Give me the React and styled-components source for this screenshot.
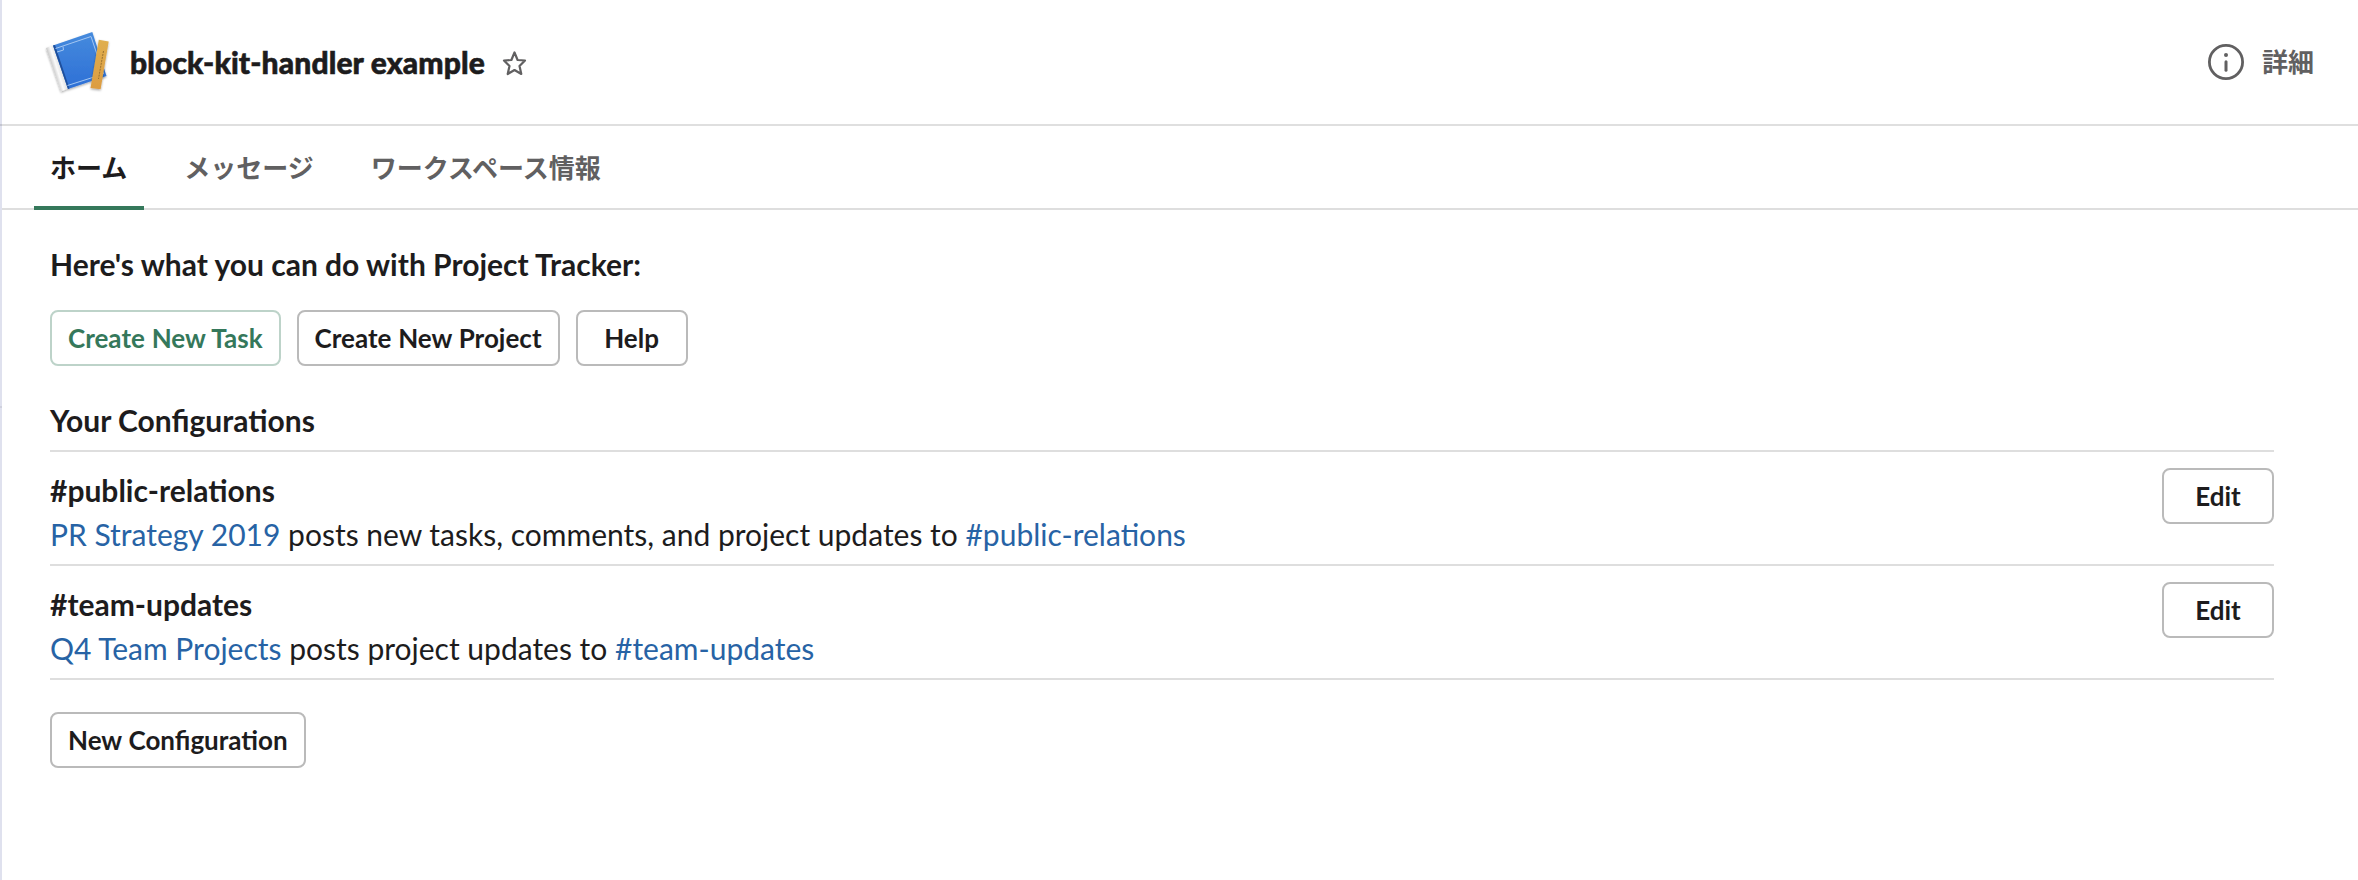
import React from 'react';
import styled, { createGlobalStyle } from 'styled-components';

const GlobalStyle = createGlobalStyle`
  *, *::before, *::after { box-sizing: border-box; }
  body {
    margin: 0;
    background: #fff;
    color: #1d1c1d;
    font-family: Lato, "Noto Sans CJK JP", sans-serif;
    font-size: 30px;
    line-height: 44px;
  }
`;

const Page = styled.div`
  height: 880px;
  padding-left: 2px;
  background:
    linear-gradient(#cfd1de, #cfd1de) 0 406px / 2px 2px no-repeat,
    linear-gradient(#dfe1ee, #dfe1ee) 0 0 / 2px 100% no-repeat,
    #fff;
`;

const Header = styled.header`
  display: flex;
  align-items: center;
  height: 126px;
  margin-left: -2px;
  padding: 0 44px 0 40px;
  border-bottom: 2px solid rgba(29, 28, 29, 0.14);
`;

const Logo = styled.svg`
  width: 74px;
  height: 74px;
  margin-top: 2px;
  flex: none;
`;

const Title = styled.h1`
  margin: 0 0 0 16px;
  font-size: 30px;
  font-weight: 900;
  line-height: 44px;
  letter-spacing: 0.13px;
  -webkit-text-stroke: 0.6px currentColor;
`;

const Star = styled.svg`
  width: 40px;
  height: 40px;
  margin: 3px 0 0 10px;
`;

const Details = styled.button`
  display: flex;
  align-items: center;
  gap: 16px;
  margin-left: auto;
  padding: 0;
  border: 0;
  background: none;
  color: #616061;
  font: 700 26px/40px Lato, "Noto Sans CJK JP", sans-serif;
`;

const InfoIcon = styled.svg`
  width: 40px;
  height: 40px;
`;

const Tabs = styled.nav`
  display: flex;
  gap: 24px;
  height: 84px;
  padding-left: 32px;
  border-bottom: 2px solid #dedede;
`;

const Tab = styled.a`
  height: 84px;
  padding: 0 17px 0 16px;
  border-bottom: 4px solid ${(p) => (p.$active ? '#35785b' : 'transparent')};
  color: ${(p) => (p.$active ? '#1d1c1d' : '#616061')};
  font-size: 26px;
  font-weight: 700;
  line-height: 84px;
`;

const Content = styled.main`
  padding: 32px 84px 0 48px;
`;

const Heading = styled.h2`
  margin: 0;
  font-size: 30px;
  font-weight: 700;
  line-height: 44px;
`;

const Actions = styled.div`
  display: flex;
  gap: 16px;
  margin: ${(p) => p.$margin};
`;

const Button = styled.button`
  height: 56px;
  min-width: 112px;
  padding: 0 16px;
  border: 2px solid ${(p) => (p.$primary ? '#bdd3c9' : '#bababa')};
  border-radius: 8px;
  background: #fff;
  color: ${(p) => (p.$primary ? '#35785b' : '#1d1c1d')};
  font: 700 26px/52px Lato, sans-serif;
  word-spacing: 0.5px;
  white-space: nowrap;
`;

const ConfigList = styled.ul`
  margin: 8px 0 0;
  padding: 0;
  border-top: 2px solid #dedede;
  list-style: none;
`;

const ConfigRow = styled.li`
  display: flex;
  justify-content: space-between;
  align-items: flex-start;
  height: 114px;
  padding-top: 16px;
  border-bottom: 2px solid #dedede;
`;

const Channel = styled.strong`
  display: block;
  font-weight: 700;
`;

const Link = styled.a`
  color: #2763a5;
`;

const configs = [
  { channel: '#public-relations', project: 'PR Strategy 2019', action: 'posts new tasks, comments, and project updates to' },
  { channel: '#team-updates', project: 'Q4 Team Projects', action: 'posts project updates to' },
];

function AppLogo() {
  return (
    <Logo viewBox="0 0 74 74" aria-hidden="true">
      <defs>
        <linearGradient id="cover" x1="0" y1="0" x2="0" y2="1">
          <stop offset="0" stopColor="#468bdd" />
          <stop offset="1" stopColor="#2d6fd6" />
        </linearGradient>
        <linearGradient id="wood" x1="0" y1="0" x2="0" y2="1">
          <stop offset="0" stopColor="#e0af4f" />
          <stop offset="1" stopColor="#dc9c42" />
        </linearGradient>
        <linearGradient id="roll" gradientUnits="userSpaceOnUse" x1="13" y1="44" x2="21" y2="41.500">
          <stop offset="0" stopColor="#c9c9c9" />
          <stop offset="0.5" stopColor="#fafafa" />
          <stop offset="1" stopColor="#e2e2e2" />
        </linearGradient>
        <filter id="soft" x="-20%" y="-20%" width="150%" height="150%">
          <feDropShadow dx="0" dy="1.2" stdDeviation="1.2" floodOpacity="0.35" />
        </filter>
      </defs>
      <g filter="url(#soft)">
        <path d="M6 22 13 19.500 28 62.500 21 65.500Z" fill="url(#roll)" />
        <path d="M13 19.500 52.300 6 66.500 50 28 63Z" fill="url(#cover)" />
      </g>
      <path d="M13 19.500 15 19 29.500 62.500 28 63Z" fill="#1e4f9c" />
      <path d="M15.500 22.500 51 10.500 63.500 48M27.500 59.500 62 48.500M17 26 23.500 24 23 20.500" fill="none" stroke="#a3c6f2" />
      <path d="M58.800 13.700 68.700 15.500 60.600 63.300 50.500 62Z" fill="url(#wood)" filter="url(#soft)" />
      <path d="M63.500 25 58.500 53" stroke="#99712f" strokeDasharray="2 1" />
    </Logo>
  );
}

function ActionButton({ children, primary }) {
  return <Button type="button" $primary={primary}>{children}</Button>;
}

export default function App() {
  return (
    <>
      <GlobalStyle />
      <Page>
        <Header>
          <AppLogo />
          <Title>block-kit-handler example</Title>
          <Star viewBox="0 0 40 40" aria-hidden="true">
            <path d="M19.500 8.500 22.600 16 30 16.500 24.500 22 26.300 30 19.500 26 12.700 30 14.500 22 9 16.500 16.400 16Z" fill="none" stroke="#616061" strokeWidth="2.200" strokeLinejoin="round" />
          </Star>
          <Details type="button">
            <InfoIcon viewBox="0 0 40 40" aria-hidden="true">
              <circle cx="20" cy="20" r="16.600" fill="none" stroke="#616061" strokeWidth="2.800" />
              <circle cx="20" cy="13" r="2" fill="#616061" />
              <path d="M20 19.800V28.200" stroke="#616061" strokeWidth="3" strokeLinecap="round" />
            </InfoIcon>
            詳細
          </Details>
        </Header>
        <Tabs>
          <Tab $active>ホーム</Tab>
          <Tab>メッセージ</Tab>
          <Tab>ワークスペース情報</Tab>
        </Tabs>
        <Content>
          <Heading>Here's what you can do with Project Tracker:</Heading>
          <Actions $margin="24px 0 32px">
            <ActionButton primary>Create New Task</ActionButton>
            <ActionButton>Create New Project</ActionButton>
            <ActionButton>Help</ActionButton>
          </Actions>
          <Heading>Your Configurations</Heading>
          <ConfigList>
            {configs.map((c) => (
              <ConfigRow key={c.channel}>
                <div>
                  <Channel>{c.channel}</Channel>
                  <Link>{c.project}</Link> {c.action} <Link>{c.channel}</Link>
                </div>
                <ActionButton>Edit</ActionButton>
              </ConfigRow>
            ))}
          </ConfigList>
          <Actions $margin="32px 0 0">
            <ActionButton>New Configuration</ActionButton>
          </Actions>
        </Content>
      </Page>
    </>
  );
}
